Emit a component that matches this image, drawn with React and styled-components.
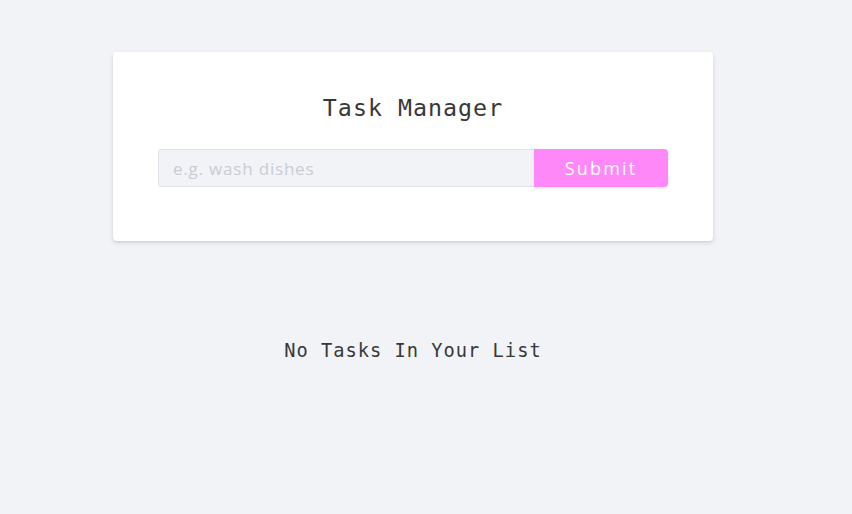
import React, { useState } from "react";
import styled, { createGlobalStyle } from "styled-components";

const GlobalStyle = createGlobalStyle`
  * { box-sizing: border-box; }
  html, body { margin: 0; padding: 0; }
  body {
    background: #f1f3f7;
    font-family: "Open Sans", "Noto Sans", sans-serif;
    color: #222;
  }
`;

const Page = styled.main`
  width: 826px;
  min-height: 514px;
  display: flex;
  flex-direction: column;
  align-items: center;
  padding-top: 52px;
`;

const Card = styled.section`
  width: 600px;
  height: 189px;
  background: #fff;
  border-radius: 4px;
  box-shadow: 0 2px 5px rgba(0, 0, 0, 0.12), 0 1px 2px rgba(0, 0, 0, 0.06);
  display: flex;
  flex-direction: column;
  align-items: center;
  padding: 38px 45px 0;
`;

const Title = styled.h3`
  margin: 0;
  font-family: "DejaVu Sans Mono", monospace;
  font-weight: 400;
  font-size: 23.3px;
  line-height: 36px;
  letter-spacing: 1px;
  color: #383838;
`;

const Form = styled.form`
  margin-top: 23px;
  width: 510px;
  display: flex;
`;

const Input = styled.input`
  flex: 1;
  height: 38px;
  margin: 0;
  padding: 0 14px;
  background: #f1f3f7;
  border: 1px solid #dde1ea;
  border-right: none;
  border-radius: 4px 0 0 4px;
  font-family: "Open Sans", "Noto Sans", sans-serif;
  font-size: 17px;
  letter-spacing: 0.8px;
  color: #333;
  outline: none;
  &::placeholder { color: #c9ccd4; }
`;

const Button = styled.button`
  width: 134px;
  height: 38px;
  margin: 0;
  border: none;
  border-radius: 0 4px 4px 0;
  background: #ff88f8;
  color: #fff;
  font-family: "Open Sans", "Noto Sans", sans-serif;
  font-size: 18px;
  letter-spacing: 2.2px;
  box-shadow: 0 1px 3px rgba(0, 0, 0, 0.1);
  cursor: pointer;
`;

const Empty = styled.p`
  margin: 96px 0 0;
  font-family: "DejaVu Sans Mono", monospace;
  font-size: 18.7px;
  letter-spacing: 1px;
  line-height: 28px;
  color: #383838;
`;

export default function App() {
  const [value, setValue] = useState("");
  return (
    <>
      <GlobalStyle />
      <Page>
        <Card>
          <Title>Task Manager</Title>
          <Form onSubmit={(e) => e.preventDefault()}>
            <Input
              placeholder="e.g. wash dishes"
              value={value}
              onChange={(e) => setValue(e.target.value)}
            />
            <Button type="submit">Submit</Button>
          </Form>
        </Card>
        <Empty>No Tasks In Your List</Empty>
      </Page>
    </>
  );
}
